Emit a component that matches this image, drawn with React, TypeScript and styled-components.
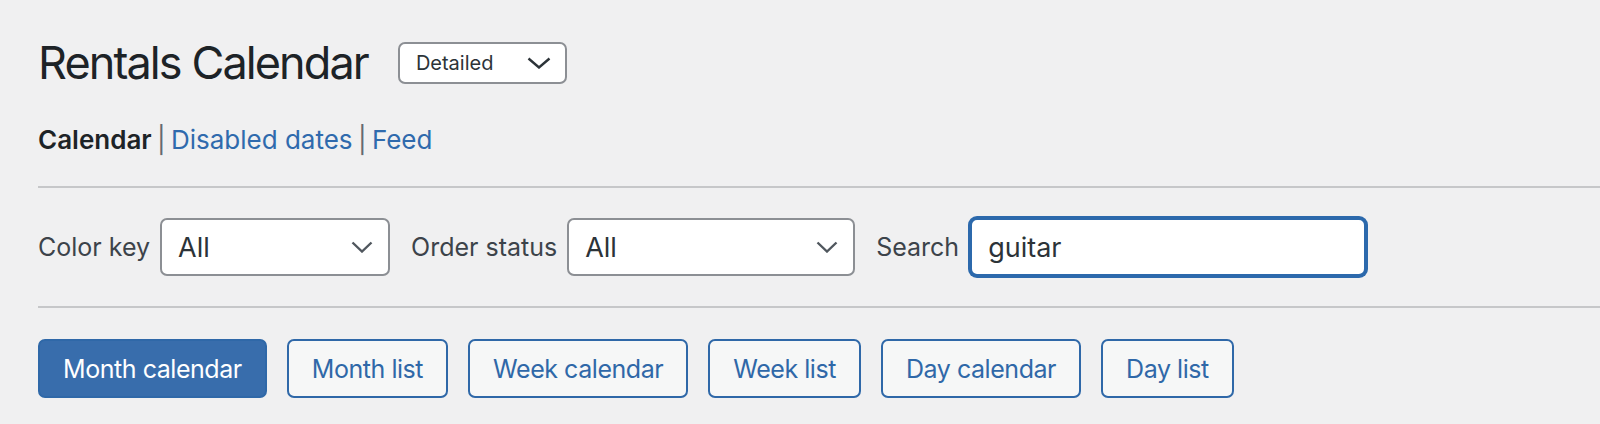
import styled, { createGlobalStyle } from "styled-components";

const GlobalStyle = createGlobalStyle`
	body {
		margin: 0;
		background: #f0f0f1;
		font-family: Inter, "Noto Sans", "Liberation Sans", sans-serif;
		color: #1d2327;
	}
`;

const PageWrap = styled.div`
	padding: 40px 0 0 38px;
`;

const HeaderRow = styled.div`
	display: flex;
	align-items: center;
	gap: 30px;
	height: 46px;
`;

const Title = styled.h1`
	margin: 0;
	font-size: 45px;
	line-height: 46px;
	font-weight: 400;
	letter-spacing: -1.9px;
	color: #1d2327;
`;

const SelectWrap = styled.div<{ $width: number; $height: number }>`
	position: relative;
	width: ${(p) => p.$width}px;
	height: ${(p) => p.$height}px;
	flex-shrink: 0;
`;

const Select = styled.select<{ $small?: boolean }>`
	appearance: none;
	width: 100%;
	height: 100%;
	box-sizing: border-box;
	margin: 0;
	border: 2px solid #8c8f94;
	border-radius: 7px;
	background: #fff;
	color: #2c3338;
	font-family: inherit;
	font-size: ${(p) => (p.$small ? "20px" : "27px")};
	padding: 0 48px 0 16px;
	outline: none;
`;

const Chevron = styled.svg<{ $small?: boolean }>`
	position: absolute;
	right: ${(p) => (p.$small ? "16px" : "17px")};
	top: 50%;
	transform: translateY(-50%);
	pointer-events: none;
`;

const SubNav = styled.div`
	margin-top: 36px;
	font-size: 26px;
	line-height: 36px;
	color: #50575e;
`;

const Current = styled.span`
	font-weight: 600;
	color: #1d2327;
`;

const Sep = styled.span`
	margin: 0 -2px;
	color: #646970;
`;

const NavLink = styled.a`
	color: #2f6aad;
	text-decoration: none;
`;

const Divider = styled.hr<{ $top?: number }>`
	border: none;
	border-top: 2px solid #c6c7c9;
	margin: ${(p) => p.$top ?? 0}px 0 0;
`;

const FilterRow = styled.div`
	display: flex;
	align-items: center;
	padding: 30px 0;
	gap: 21px;
`;

const Field = styled.label`
	display: flex;
	align-items: center;
	gap: 10px;
`;

const FieldLabel = styled.span`
	font-size: 25px;
	color: #3c434a;
`;

const SearchInput = styled.input<{ $width: number }>`
	width: ${(p) => p.$width}px;
	height: 58px;
	box-sizing: border-box;
	margin: 0 0 0 1px;
	border: 2px solid #2c69ac;
	box-shadow: 0 0 0 2px #2c69ac;
	border-radius: 7px;
	background: #fff;
	color: #2c3338;
	font-family: inherit;
	font-size: 27px;
	padding: 0 16px;
	outline: none;
`;

const ButtonRow = styled.div`
	display: flex;
	gap: 20px;
	padding-top: 31px;
`;

const ViewButton = styled.button<{ $active?: boolean }>`
	height: 59px;
	box-sizing: border-box;
	padding: 0 23px;
	border-radius: 7px;
	border: 2px solid #2f68a8;
	background: ${(p) => (p.$active ? "#386dac" : "#f6f7f7")};
	color: ${(p) => (p.$active ? "#fff" : "#2f68a8")};
	font-family: inherit;
	font-size: 25px;
	letter-spacing: -0.45px;
	cursor: pointer;
`;

const ChevronIcon = ({ small }: { small?: boolean }) =>
	small ? (
		<Chevron $small width="24" height="12" viewBox="0 0 24 12">
			<path d="M1.5 1.5 L12 10.5 L22.5 1.5" fill="none" stroke="#2c3338" strokeWidth="2.4" />
		</Chevron>
	) : (
		<Chevron width="22" height="12" viewBox="0 0 22 12">
			<path d="M1.5 1.5 L11 10.5 L20.5 1.5" fill="none" stroke="#50575e" strokeWidth="2.4" />
		</Chevron>
	);

const views = [
	"Month calendar",
	"Month list",
	"Week calendar",
	"Week list",
	"Day calendar",
	"Day list",
];

export default function App() {
	return (
		<>
			<GlobalStyle />
			<PageWrap>
				<HeaderRow>
					<Title>Rentals Calendar</Title>
					<SelectWrap $width={169} $height={42}>
						<Select $small defaultValue="detailed">
							<option value="detailed">Detailed</option>
							<option value="simple">Simple</option>
						</Select>
						<ChevronIcon small />
					</SelectWrap>
				</HeaderRow>

				<SubNav>
					<Current>Calendar</Current> <Sep>|</Sep> <NavLink href="#">Disabled dates</NavLink>{" "}
					<Sep>|</Sep> <NavLink href="#">Feed</NavLink>
				</SubNav>

				<Divider $top={28} />

				<FilterRow>
					<Field>
						<FieldLabel>Color key</FieldLabel>
						<SelectWrap $width={230} $height={58}>
							<Select defaultValue="all">
								<option value="all">All</option>
							</Select>
							<ChevronIcon />
						</SelectWrap>
					</Field>
					<Field>
						<FieldLabel>Order status</FieldLabel>
						<SelectWrap $width={288} $height={58}>
							<Select defaultValue="all">
								<option value="all">All</option>
							</Select>
							<ChevronIcon />
						</SelectWrap>
					</Field>
					<Field>
						<FieldLabel>Search</FieldLabel>
						<SearchInput $width={396} defaultValue="guitar" />
					</Field>
				</FilterRow>

				<Divider />

				<ButtonRow>
					{views.map((v, i) => (
						<ViewButton key={v} $active={i === 0}>
							{v}
						</ViewButton>
					))}
				</ButtonRow>
			</PageWrap>
		</>
	);
}
